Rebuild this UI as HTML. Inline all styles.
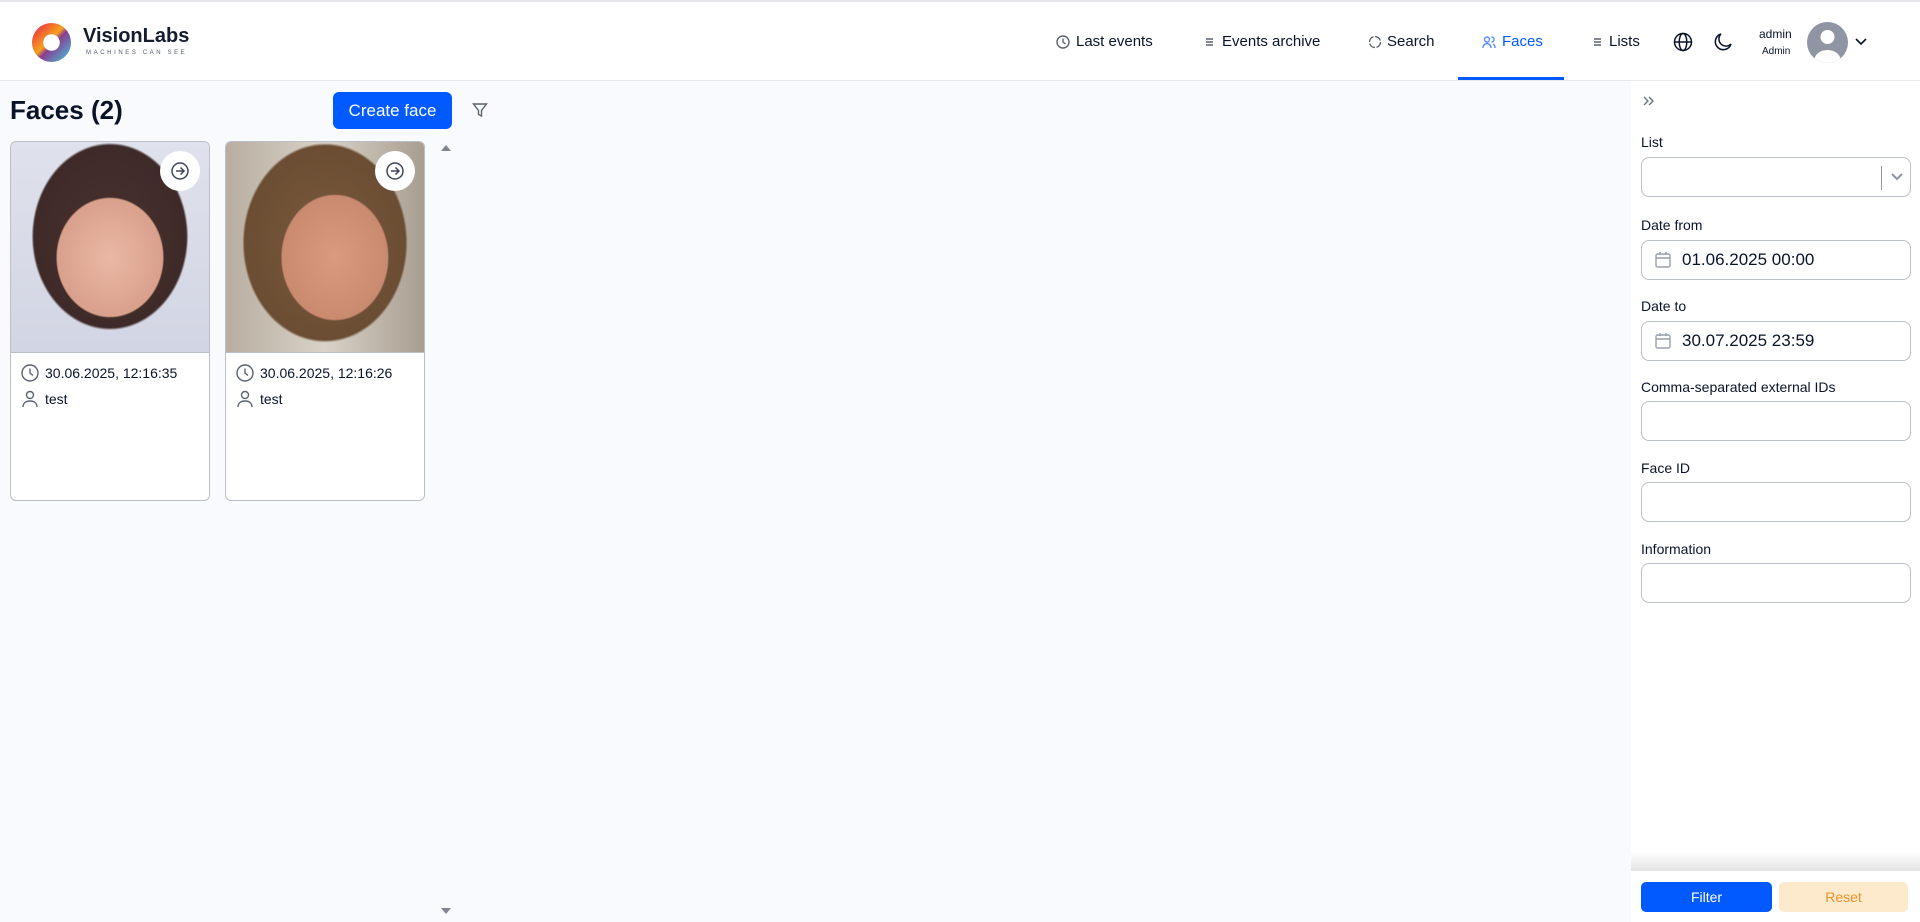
<!DOCTYPE html>
<html><head><meta charset="utf-8"><style>
*{box-sizing:border-box;margin:0;padding:0}
body{width:1920px;height:922px;overflow:hidden;background:#f9fafd;font-family:"Liberation Sans",sans-serif;color:#0a1429;position:relative}
.a{position:absolute}
.hdr{position:absolute;left:0;top:0;width:1920px;height:81px;background:#fff;border-top:2px solid #e4e6ea;border-bottom:1px solid #e6e8ee}
.nt{position:absolute;top:31px;font-size:15px;white-space:nowrap}
.ic{position:absolute;fill:none;stroke:#5b6270;stroke-width:1.4}
.card{position:absolute;top:141px;width:200px;height:360px;border:1px solid #b9bec9;border-radius:6px;background:#fff;overflow:hidden}
.img{height:211px;border-bottom:1px solid #b9bec9;position:relative}
.arr{position:absolute;right:9px;top:9px;width:40px;height:40px;border-radius:50%;background:#fff}
.ln{position:absolute;left:34px;font-size:14px}
.side{position:absolute;left:1631px;top:81px;width:289px;height:841px;background:#fff}
.lbl{position:absolute;left:10px;font-size:14px}
.inp{position:absolute;left:10px;width:270px;height:40px;border:1px solid #b9bec9;border-radius:8px;font-size:17px}
.fb{position:absolute;top:801px;height:30px;border-radius:5px;text-align:center;line-height:30px;font-size:14px}
</style></head><body>
<div class="hdr">
 <svg class="a" style="left:31px;top:20px" width="41" height="41" viewBox="0 0 42 42"><defs><linearGradient id="g" x1="0" y1="0" x2="1" y2="1"><stop offset="0" stop-color="#e8194f"/><stop offset=".45" stop-color="#f7a21b"/><stop offset=".55" stop-color="#8a3d8f"/><stop offset="1" stop-color="#3ccde0"/></linearGradient></defs><circle cx="21" cy="21" r="20" fill="url(#g)"/><circle cx="21" cy="21" r="8.5" fill="#fff"/></svg>
 <div class="a" style="left:83px;top:23px;font-size:20px;font-weight:700;color:#141c2e">VisionLabs</div>
 <div class="a" style="left:86px;top:48px;font-size:6px;letter-spacing:2.6px;color:#555c6c">MACHINES CAN SEE</div>

 <svg class="ic" style="left:1056px;top:33px" width="14" height="14" viewBox="0 0 14 14"><circle cx="7" cy="7" r="6"/><path d="M7 3.5V7l2.5 2"/></svg>
 <div class="nt" style="left:1076px">Last events</div>
 <svg class="ic" style="left:1204px;top:34px" width="12" height="12" viewBox="0 0 12 12"><path d="M2 3h7M2 6h7M2 9h7"/></svg>
 <div class="nt" style="left:1222px">Events archive</div>
 <svg class="ic" style="left:1368px;top:33px" width="14" height="14" viewBox="0 0 14 14"><circle cx="7" cy="7" r="5.5" stroke-dasharray="7 1.6"/></svg>
 <div class="nt" style="left:1387px">Search</div>
 <svg class="ic" style="left:1482px;top:33px;stroke:#5a8cff" width="14" height="14" viewBox="0 0 14 14"><circle cx="5" cy="4.5" r="2.5"/><path d="M1 13c0-3 2-4.5 4-4.5s4 1.5 4 4.5M9.5 2a2.5 2.5 0 010 5M11 9c1.5.6 2 2 2 4"/></svg>
 <div class="nt" style="left:1502px;color:#005aff">Faces</div>
 <svg class="ic" style="left:1592px;top:34px" width="12" height="12" viewBox="0 0 12 12"><path d="M2 3h7M2 6h7M2 9h7"/></svg>
 <div class="nt" style="left:1609px">Lists</div>
 <div class="a" style="left:1458px;top:75px;width:106px;height:3px;background:#005aff"></div>

 <svg class="ic" style="left:1673px;top:30px;stroke:#0a1429;stroke-width:1.5" width="20" height="20" viewBox="0 0 20 20"><circle cx="10" cy="10" r="8.5"/><ellipse cx="10" cy="10" rx="3.8" ry="8.5"/><path d="M1.5 10h17"/></svg>
 <svg class="ic" style="left:1713px;top:30px;stroke:#0a1429;stroke-width:1.5" width="20" height="20" viewBox="0 0 20 20"><path d="M8 2a8 8 0 1010 10A6.5 6.5 0 018 2z"/></svg>
 <div class="a" style="left:1759px;top:25px;font-size:12px">admin</div>
 <div class="a" style="left:1762px;top:44px;font-size:10px">Admin</div>
 <svg class="a" style="left:1807px;top:20px" width="41" height="41" viewBox="0 0 41 41"><defs><clipPath id="c"><circle cx="20.5" cy="20.5" r="20.5"/></clipPath></defs><circle cx="20.5" cy="20.5" r="20.5" fill="#8f95a3"/><g clip-path="url(#c)" fill="#fff"><circle cx="20.5" cy="15" r="7"/><ellipse cx="20.5" cy="38" rx="13" ry="10"/></g></svg>
 <svg class="ic" style="left:1855px;top:35px;stroke:#0a1429;stroke-width:1.6" width="12" height="10" viewBox="0 0 12 10"><path d="M1 2l5 5 5-5"/></svg>
</div>

<div class="a" style="left:10px;top:95px;font-size:26px;font-weight:600">Faces (2)</div>
<div class="a" style="left:333px;top:92px;width:119px;height:37px;background:#005aff;color:#fff;border-radius:6px;font-size:17px;text-align:center;line-height:37px">Create face</div>
<svg class="ic" style="left:472px;top:102px" width="16" height="16" viewBox="0 0 16 16"><path d="M1.5 2h13L9.5 8.5V14l-3-1.5V8.5z"/></svg>

<div class="card" style="left:10px">
 <div class="img" style="background:radial-gradient(ellipse 38% 40% at 50% 55%,#e9b8a5 0,#d9a08c 70%,transparent 72%),radial-gradient(ellipse 55% 62% at 50% 45%,#4a3230 0,#3e2a28 70%,transparent 72%),linear-gradient(#dfe1ec,#d2d5e3)"><div class="arr"><svg class="ic" style="left:10px;top:10px;stroke:#3e4656;stroke-width:1.5" width="20" height="20" viewBox="0 0 20 20"><circle cx="10" cy="10" r="8"/><path d="M6 10h8M10.5 6.5L14 10l-3.5 3.5"/></svg></div></div>
 <svg class="ic" style="left:10px;top:222px" width="18" height="18" viewBox="0 0 18 18"><circle cx="9" cy="9" r="8"/><path d="M9 4.5V9l3 2.5"/></svg>
 <div class="ln" style="top:223px">30.06.2025, 12:16:35</div>
 <svg class="ic" style="left:10px;top:248px" width="18" height="18" viewBox="0 0 18 18"><circle cx="9" cy="5" r="3.5"/><path d="M2 17c0-4 3-6 7-6s7 2 7 6"/></svg>
 <div class="ln" style="top:249px">test</div>
</div>
<div class="card" style="left:225px">
 <div class="img" style="background:radial-gradient(ellipse 38% 42% at 55% 55%,#d99a7f 0,#c98a70 70%,transparent 72%),radial-gradient(ellipse 58% 66% at 50% 48%,#7a5a3e 0,#6b4d33 70%,transparent 72%),linear-gradient(90deg,#b8ada0,#d9d2c8,#a89d90)"><div class="arr"><svg class="ic" style="left:10px;top:10px;stroke:#3e4656;stroke-width:1.5" width="20" height="20" viewBox="0 0 20 20"><circle cx="10" cy="10" r="8"/><path d="M6 10h8M10.5 6.5L14 10l-3.5 3.5"/></svg></div></div>
 <svg class="ic" style="left:10px;top:222px" width="18" height="18" viewBox="0 0 18 18"><circle cx="9" cy="9" r="8"/><path d="M9 4.5V9l3 2.5"/></svg>
 <div class="ln" style="top:223px">30.06.2025, 12:16:26</div>
 <svg class="ic" style="left:10px;top:248px" width="18" height="18" viewBox="0 0 18 18"><circle cx="9" cy="5" r="3.5"/><path d="M2 17c0-4 3-6 7-6s7 2 7 6"/></svg>
 <div class="ln" style="top:249px">test</div>
</div>
<div class="a" style="left:441px;top:145px;width:0;height:0;border-left:5px solid transparent;border-right:5px solid transparent;border-bottom:6px solid #808590"></div>
<div class="a" style="left:441px;top:908px;width:0;height:0;border-left:5px solid transparent;border-right:5px solid transparent;border-top:6px solid #808590"></div>

<div class="side">
 <svg class="ic" style="left:11px;top:14px;stroke:#6b7280" width="14" height="12" viewBox="0 0 14 12"><path d="M2 2l4 4-4 4M7 2l4 4-4 4"/></svg>
 <div class="lbl" style="top:53px">List</div>
 <div class="inp" style="top:76px"><div class="a" style="left:239px;top:8px;width:1px;height:24px;background:#8f95a3"></div><svg class="ic" style="left:248px;top:14px;stroke:#8f95a3;stroke-width:2" width="14" height="10" viewBox="0 0 14 10"><path d="M2 2l5 5 5-5"/></svg></div>
 <div class="lbl" style="top:136px">Date from</div>
 <div class="inp" style="top:159px"><svg class="ic" style="left:12px;top:10px;stroke:#9aa0ac" width="18" height="18" viewBox="0 0 18 18"><rect x="2" y="3" width="14" height="13" rx="1.5"/><path d="M2 7h14M6 1v3M12 1v3"/></svg><div class="a" style="left:40px;top:9px">01.06.2025 00:00</div></div>
 <div class="lbl" style="top:217px">Date to</div>
 <div class="inp" style="top:240px"><svg class="ic" style="left:12px;top:10px;stroke:#9aa0ac" width="18" height="18" viewBox="0 0 18 18"><rect x="2" y="3" width="14" height="13" rx="1.5"/><path d="M2 7h14M6 1v3M12 1v3"/></svg><div class="a" style="left:40px;top:9px">30.07.2025 23:59</div></div>
 <div class="lbl" style="top:298px">Comma-separated external IDs</div>
 <div class="inp" style="top:320px"></div>
 <div class="lbl" style="top:379px">Face ID</div>
 <div class="inp" style="top:401px"></div>
 <div class="lbl" style="top:460px">Information</div>
 <div class="inp" style="top:482px"></div>
 <div class="a" style="left:0;top:770px;width:289px;height:20px;background:linear-gradient(#fff,#e4e4e4)"></div>
 <div class="fb" style="left:10px;width:131px;background:#005aff;color:#fff">Filter</div>
 <div class="fb" style="left:148px;width:129px;background:#fde9cc;color:#e8932a">Reset</div>
</div>
</body></html>
